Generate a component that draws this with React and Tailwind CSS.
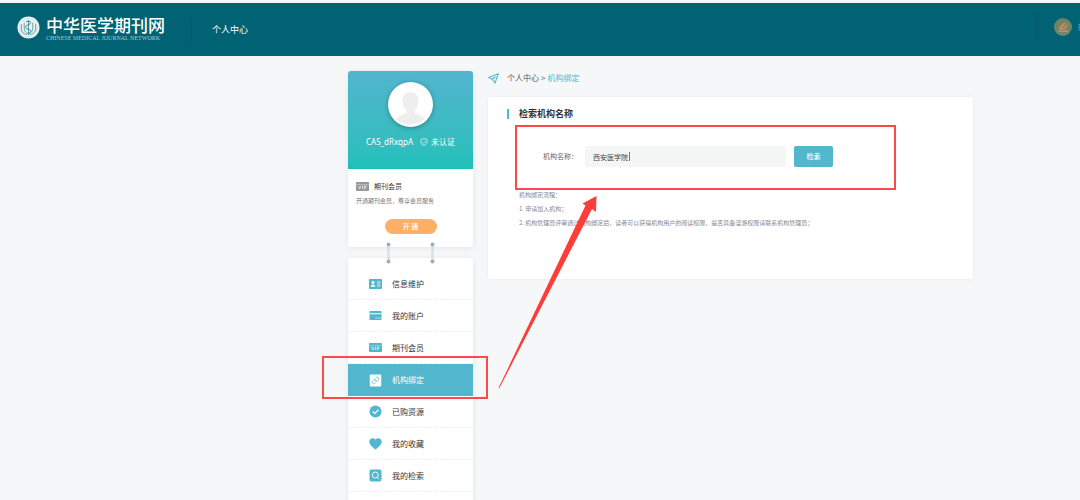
import React, { useState } from 'react';

function LogoMark() {
  return (
    <svg className="size-[23px] shrink-0" viewBox="0 0 24 24" fill="none" aria-hidden="true">
      <circle cx="12" cy="12" r="11.5" fill="#e9f3f4" />
      <circle cx="12" cy="12" r="9.5" stroke="#c3dcdf" strokeWidth="0.6" />
      <path d="M12 4v16" stroke="#5e9ea8" strokeWidth="1" />
      <path d="M9.5 6c5-1.5 6.5 1.500 2.500 3s-4 4 0 5 3 3.500-.5 4" stroke="#2f7f8c" strokeWidth="1" />
      <path d="M7.500 7v5.500c0 3 1.500 4.500 4 6M16.500 7v5.500c0 3-1.500 4.500-4 6M4.500 8.500v5c0 3 2.500 5 6 6M19.500 8.500v5c0 3-2.500 5-6 6" stroke="#5e9ea8" strokeWidth="1" />
    </svg>
  );
}

function VipIcon({ color }) {
  return (
    <svg className="h-[9px] w-[13px] shrink-0" viewBox="0 0 26 18" aria-hidden="true">
      <rect width="26" height="18" rx="1.5" fill={color} />
      <path d="M0 4.500h26" stroke="#fff" strokeWidth="1" opacity="0.8" />
      <path d="M5 7.500l2.500 6.500 2.500-6.500M13 7.500v6.500M16.500 14.500v-6.500h3.500v3.500h-3.500" fill="none" stroke="#fff" strokeWidth="1.2" />
    </svg>
  );
}

function IdCardIcon() {
  return (
    <svg className="h-[10px] w-[13px] shrink-0" viewBox="0 0 26 20" aria-hidden="true">
      <rect width="26" height="20" rx="1.5" fill="#52b7cd" />
      <circle cx="8" cy="7" r="2.800" fill="#fff" />
      <path d="M3.500 15.500c0-6 9-6 9 0z" fill="#fff" />
      <path d="M16 6h7M16 10h7M16 14h7" stroke="#fff" strokeWidth="1.500" />
    </svg>
  );
}

function BankCardIcon() {
  return (
    <svg className="h-[9px] w-[13px] shrink-0" viewBox="0 0 26 18" aria-hidden="true">
      <rect x="1" width="24" height="18" rx="1.500" fill="#52b7cd" />
      <path d="M1 5.500h24" stroke="#fff" strokeWidth="2" />
      <path d="M13 14h4M19 14h4" stroke="#fff" strokeWidth="1.500" />
    </svg>
  );
}

function LinkIcon() {
  return (
    <svg className="size-[13px] shrink-0" viewBox="0 0 26 26" fill="none" aria-hidden="true">
      <rect x="1.500" y="1" width="23" height="24" rx="2" fill="#fff" />
      <g stroke="#52b7cd" strokeWidth="2" strokeLinecap="round" transform="translate(4.800 4.800) scale(.68)">
        <path d="M10 13a5 5 0 0 0 7.540.540l3-3a5 5 0 0 0-7.070-7.070l-1.720 1.710" />
        <path d="M14 11a5 5 0 0 0-7.540-.540l-3 3a5 5 0 0 0 7.070 7.070l1.710-1.710" />
      </g>
    </svg>
  );
}

function CheckIcon() {
  return (
    <svg className="size-[13px] shrink-0" viewBox="0 0 26 26" aria-hidden="true">
      <circle cx="13" cy="13" r="12" fill="#52b7cd" />
      <path d="M7.500 13l4 4 7.500-7.500" fill="none" stroke="#fff" strokeWidth="2.200" />
    </svg>
  );
}

function HeartIcon() {
  return (
    <svg className="size-[13px] shrink-0" viewBox="0 0 26 26" aria-hidden="true">
      <path d="M13 25C7 20.500 0.500 15.500 0.500 9c0-6.500 8.500-9 12.500-3.500C17 0 25.500 2.500 25.500 9c0 6.500-6.500 11.500-12.500 16z" fill="#52b7cd" />
    </svg>
  );
}

function SearchIcon() {
  return (
    <svg className="size-[13px] shrink-0" viewBox="0 0 26 26" fill="none" aria-hidden="true">
      <rect x="1" y="1" width="24" height="24" rx="4" fill="#52b7cd" />
      <circle cx="12.500" cy="12" r="6" stroke="#fff" strokeWidth="1.800" />
      <path d="M16.500 16.500l4 4" stroke="#fff" strokeWidth="1.800" />
    </svg>
  );
}

const menu = [
  { label: '信息维护', icon: <IdCardIcon /> },
  { label: '我的账户', icon: <BankCardIcon /> },
  { label: '期刊会员', icon: <VipIcon color="#52b7cd" /> },
  { label: '机构绑定', icon: <LinkIcon />, active: true },
  { label: '已购资源', icon: <CheckIcon /> },
  { label: '我的收藏', icon: <HeartIcon /> },
  { label: '我的检索', icon: <SearchIcon /> },
];

function Header() {
  return (
    <header className="flex h-[53px] shrink-0 items-center overflow-hidden bg-[#006272] pl-[17px] text-white">
      <a href="#" className="flex w-[148px] items-center gap-1.5 pb-1">
        <LogoMark />
        <span className="block">
          <span className="block text-[17px] leading-5 font-medium whitespace-nowrap">中华医学期刊网</span>
          <span className="block font-['Liberation_Serif'] text-[6px] leading-[6px] whitespace-nowrap text-[#a9cdd2]">
            CHINESE MEDICAL JOURNAL NETWORK
          </span>
        </span>
      </a>
      <span className="ml-[26px] h-[26px] w-px bg-[#00586a]" />
      <a href="#" className="ml-5 text-[9px] leading-4">个人中心</a>
      <div className="ml-auto flex shrink-0 items-center pb-1.5">
        <span className="h-[26px] w-px bg-[#00586a]" />
        <svg className="ml-[17px] size-[18px]" viewBox="0 0 36 36" fill="none" aria-hidden="true">
          <circle cx="18" cy="18" r="18" fill="#6f8468" />
          <path d="M9 26.500h19" stroke="#d99a5b" strokeWidth="2" />
          <path d="M11 22l3-6 7-6 5 5-4 7H11l8-6M17 13l5 5" stroke="#d99a5b" strokeWidth="2" />
        </svg>
        <a href="#" className="ml-1.5 w-0.5 overflow-hidden text-[8px] leading-4 whitespace-nowrap text-[#3fb8dc]">新</a>
      </div>
    </header>
  );
}

function UserCard() {
  return (
    <section className="rounded-[3px] bg-white shadow-[0_1px_6px_rgba(0,0,0,0.08)]">
      <div className="flex h-[98px] flex-col items-center rounded-t-[3px] bg-linear-to-b from-[#52b5ce] to-[#1fc0b9] pt-[11px] text-white">
        <svg className="size-[45px] rounded-full bg-white shadow-[0_1px_5px_rgba(0,0,0,0.3)]" viewBox="0 0 45 45" aria-hidden="true">
          <path d="M22.500 10c-5 0-8 3.500-8 8.500 0 4 1.500 7.500 4 9.500v3c-4 1.500-8 3-10.500 6a22 22 0 0 0 29 0c-2.500-3-6.500-4.500-10.500-6v-3c2.500-2 4-5.500 4-9.500 0-5-3-8.500-8-8.500z" fill="#eee" />
        </svg>
        <p className="mt-2 flex items-center text-[8px] leading-[14px]">
          <span className="font-['Noto_Sans']">CAS_dRxqpA</span>
          <svg className="mr-[3px] ml-[7px] size-2" viewBox="0 0 16 16" fill="none" stroke="#fff" strokeWidth="1.300" aria-hidden="true">
            <path d="M8 1l6 2v5c0 4-3 6-6 7-3-1-6-3-6-7V3z" />
            <path d="M5 8l2.200 2.200L11.500 6" />
          </svg>
          未认证
        </p>
      </div>
      <div className="px-2 pt-[11px] pb-[13px]">
        <h2 className="flex items-center gap-[5px] text-[7px] leading-3 text-[#333]">
          <VipIcon color="#999" />
          期刊会员
        </h2>
        <p className="mt-[3px] text-[6px] leading-3 text-[#777]">开通期刊会员，尊享会员服务</p>
        <button type="button" className="mx-auto mt-3 block h-[15px] w-[52px] rounded-full bg-[#ffb066] text-[7px] leading-[15px] font-medium text-white">
          开 通
        </button>
      </div>
    </section>
  );
}

function Pin() {
  return (
    <svg className="h-[22px] w-[5px]" viewBox="0 0 5 22" aria-hidden="true">
      <path d="M2.500 3v16" stroke="#d3e2e7" strokeWidth="2.500" />
      <circle cx="2.500" cy="2.500" r="2" fill="#a5abad" />
      <circle cx="2.500" cy="19.500" r="2" fill="#a5abad" />
    </svg>
  );
}

function SideMenu() {
  return (
    <nav className="relative mt-[11px] flex-1 rounded-t-[3px] bg-white pt-2.5 pb-8 shadow-[0_1px_6px_rgba(0,0,0,0.08)]">
      {/* pins that hang the menu from the card above */}
      <div className="absolute inset-x-[38px] -top-4 flex justify-between">
        <Pin />
        <Pin />
      </div>
      <ul>
        {menu.map((item) => (
          <li key={item.label}>
            <a
              href="#"
              className={
                item.active
                  ? 'flex h-8 items-center gap-2.5 bg-[#52b7cd] pl-[21px] text-[8px] text-white'
                  : 'flex h-8 items-center gap-2.5 border-b border-dashed border-[#eee] pl-[21px] text-[8px] text-[#333]'
              }
            >
              {item.icon}
              {item.label}
            </a>
          </li>
        ))}
      </ul>
    </nav>
  );
}

function SearchPanel() {
  const [name, setName] = useState('西安医学院');

  return (
    <section className="rounded-[3px] bg-white px-[19px] pt-2.5 pb-[49px] shadow-[0_0_4px_rgba(0,0,0,0.06)]">
      <h1 className="flex items-center gap-2.5 text-[9px] leading-[14px] font-bold text-[#333]">
        <span className="h-2.5 w-0.5 bg-[#52b7cd]" />
        检索机构名称
      </h1>
      <form className="mt-[25px] flex h-[21px] items-center pl-9 text-[7px]" onSubmit={(e) => e.preventDefault()}>
        <label htmlFor="org" className="w-[42px] text-[#666]">机构名称：</label>
        <span className="relative h-full w-[201px]">
          <input
            id="org"
            type="text"
            value={name}
            onChange={(e) => setName(e.target.value)}
            className="h-full w-full rounded-[2px] bg-[#f4f6f6] px-2 text-[#444] outline-none"
          />
          <span className="absolute top-1.5 left-11 h-[9px] w-px bg-[#777]" />
        </span>
        <button type="submit" className="ml-2 h-full w-[39px] rounded-[2px] bg-[#52b7cd] font-medium text-white">
          检索
        </button>
      </form>
      <div className="mt-[21px] pl-3 text-[6px] leading-[14px] text-[#888]">
        <p>机构绑定流程：</p>
        <p>1. 申请加入机构；</p>
        <p>2. 机构管理员评审通过机构绑定后，读者可以获得机构用户的阅读权限，是否具备漫游权限请联系机构管理员；</p>
      </div>
    </section>
  );
}

// Red frames and arrow laid over the page
function Annotations() {
  return (
    <div className="pointer-events-none absolute inset-0">
      <div className="absolute top-[356px] left-[322px] h-[43px] w-[166px] border-2 border-[#fa4a4a]" />
      <div className="absolute top-[125px] left-[515px] h-[65px] w-[381px] border-2 border-[#fa4a4a]" />
      <svg className="absolute top-[195px] left-[497px] h-[195px] w-[102px]" viewBox="0 0 102 195" aria-hidden="true">
        <path d="M1.500 193L88.500 10.500L85.500 8.500L99.500 1L99 17L95 14L2.300 193.300z" fill="#fc3d3a" />
      </svg>
    </div>
  );
}

function App() {
  return (
    <div className="relative flex h-screen flex-col overflow-hidden bg-[#f5f7f9] pt-[3px] font-['Noto_Sans_CJK_SC',sans-serif]">
      <Header />
      <div className="flex flex-1 gap-[15px] pt-[15px] pr-[107px] pl-[348px]">
        <aside className="flex w-[125px] shrink-0 flex-col">
          <UserCard />
          <SideMenu />
        </aside>
        <main className="min-w-0 flex-1">
          <div className="mb-3 flex h-3.5 items-center text-[8px] text-[#555]">
            <svg className="mr-2 size-[11px]" viewBox="0 0 22 22" fill="none" stroke="#52b7cd" strokeWidth="2.200" strokeLinejoin="round" aria-hidden="true">
              <path d="M20.500 1.500L1.500 9l7 3.500L14 20z" />
              <path d="M8.500 12.500L15 7.500" />
            </svg>
            <a href="#">个人中心</a>
            <span className="mx-0.5">&gt;</span>
            <a href="#" className="text-[#52b7cd]">机构绑定</a>
          </div>
          <SearchPanel />
        </main>
      </div>
      <Annotations />
    </div>
  );
}

export default App;
